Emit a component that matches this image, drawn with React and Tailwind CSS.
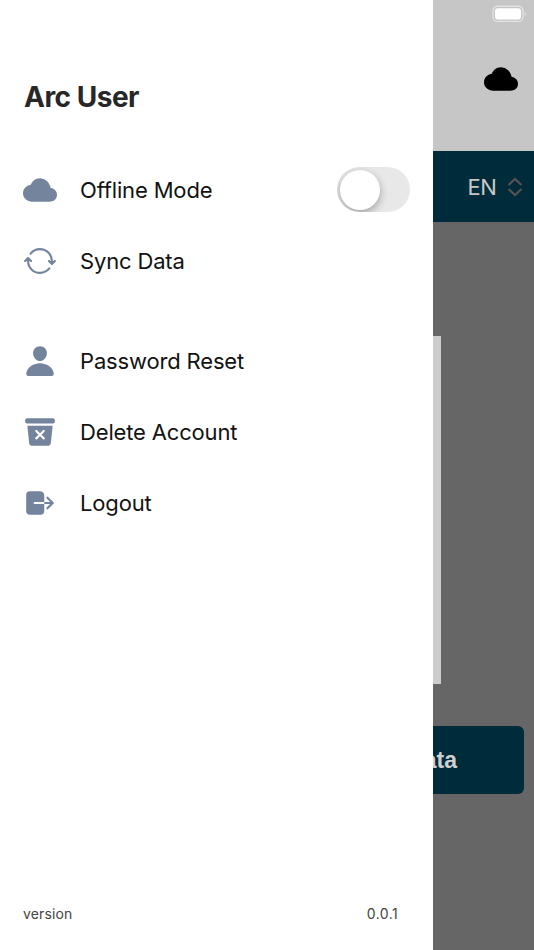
import { IoCloud, IoPerson, IoTrashBin, IoLogOut } from 'react-icons/io5';

const SyncIcon = () => (
  <svg width="34" height="34" viewBox="0 0 512 512" fill="none" stroke="currentColor" strokeWidth="32" strokeLinecap="round" strokeLinejoin="round">
    <path d="M434.67 285.59v-29.8c0-98.73-80.24-178.79-179.2-178.79a179 179 0 0 0-140.14 67.36m-38.53 82v29.8C76.8 355 157 435 256 435a180.45 180.45 0 0 0 140-66.92" />
    <path fill="currentColor" d="m32 256 44-44 46 44M480 256l-44 44-46-44" />
  </svg>
);

const MenuItem = ({ icon, label, children }) => (
  <div className="flex h-[71px] items-center">
    <span className="text-[#73849c]">{icon}</span>
    <span className="ml-[23px] flex-1 whitespace-nowrap pt-px text-[22px] leading-7 tracking-[-0.16px] text-[#121212]">{label}</span>
    {children}
  </div>
);

const Toggle = () => (
  <div className="mr-[23px] flex h-[45px] w-[73px] items-center overflow-hidden rounded-full bg-[#e8e8e8] pl-[3px]">
    <div className="h-10 w-10 rounded-full bg-white shadow-[0_3px_9px_rgba(0,0,0,0.32)]" />
  </div>
);

const Drawer = () => (
  <aside className="flex h-full w-[433px] shrink-0 flex-col bg-white pl-[23px]">
    <h1 className="ml-px mt-[77px] text-[28px] font-bold leading-10 tracking-[-0.5px] text-[#272727]">Arc User</h1>
    <nav className="mt-[37px] flex flex-col">
      <MenuItem icon={<IoCloud size={34} />} label="Offline Mode">
        <Toggle />
      </MenuItem>
      <MenuItem icon={<SyncIcon />} label="Sync Data" />
      <div className="h-[29px]" />
      <MenuItem icon={<IoPerson size={34} />} label="Password Reset" />
      <MenuItem icon={<IoTrashBin size={34} />} label="Delete Account" />
      <MenuItem icon={<IoLogOut size={34} />} label="Logout" />
    </nav>
    <footer className="mb-[26px] mt-auto flex justify-between pr-[35px] text-sm leading-5 text-[#444444]">
      <span className="tracking-[0.15px]">version</span>
      <span className="tracking-[0.4px]">0.0.1</span>
    </footer>
  </aside>
);

const Battery = () => (
  <svg width="35" height="18" viewBox="0 0 35 18" fill="none">
    <rect x="1" y="1.2" width="30" height="15.2" rx="4.5" stroke="#e2e2e2" strokeWidth="1.4" />
    <rect x="3" y="3.2" width="26" height="11.2" rx="2.8" fill="#fff" />
    <path d="M32.6 6.6c1.5.6 1.5 4.2 0 4.8z" fill="#e2e2e2" />
  </svg>
);

// Dimmed strip of the page left visible beside the drawer
const Backdrop = () => (
  <main className="flex h-full min-w-0 flex-1 flex-col overflow-hidden bg-[#666666]">
    <header className="flex h-[151px] shrink-0 flex-col items-end bg-[#c6c6c6] pt-[5px]">
      <div className="mr-[7.5px]">
        <Battery />
      </div>
      <IoCloud size={34} className="mr-[16.5px] mt-[38.5px] text-black" />
    </header>
    <div className="flex h-[71px] shrink-0 items-center justify-end bg-[#002b3b] pr-[11px]">
      <span className="pt-px text-[22px] leading-7 tracking-[-0.4px] text-[#c8c8c8]">EN</span>
      <svg className="ml-[10.5px]" width="16" height="20" viewBox="0 0 16 20" fill="none" stroke="#575250" strokeWidth="2.2">
        <path d="M1.5 8 8 2l6.5 6M1.5 12 8 18l6.5-6" />
      </svg>
    </div>
    <div className="mt-[114px] h-[348px] w-2 shrink-0 bg-[#cccccc]" />
    <div className="mr-[10px] mt-[42px] flex h-[68px] shrink-0 items-center justify-end rounded-r-[6px] bg-[#002b3b] pr-[67px]">
      <span className="font-['Liberation_Sans',Arial,sans-serif] text-[23px] font-bold leading-7 text-[#d0d0d0]">ata</span>
    </div>
  </main>
);

export default function App() {
  return (
    <div className="flex h-[950px] w-[534px] overflow-hidden bg-white font-['Inter',sans-serif]">
      <Drawer />
      <Backdrop />
    </div>
  );
}
